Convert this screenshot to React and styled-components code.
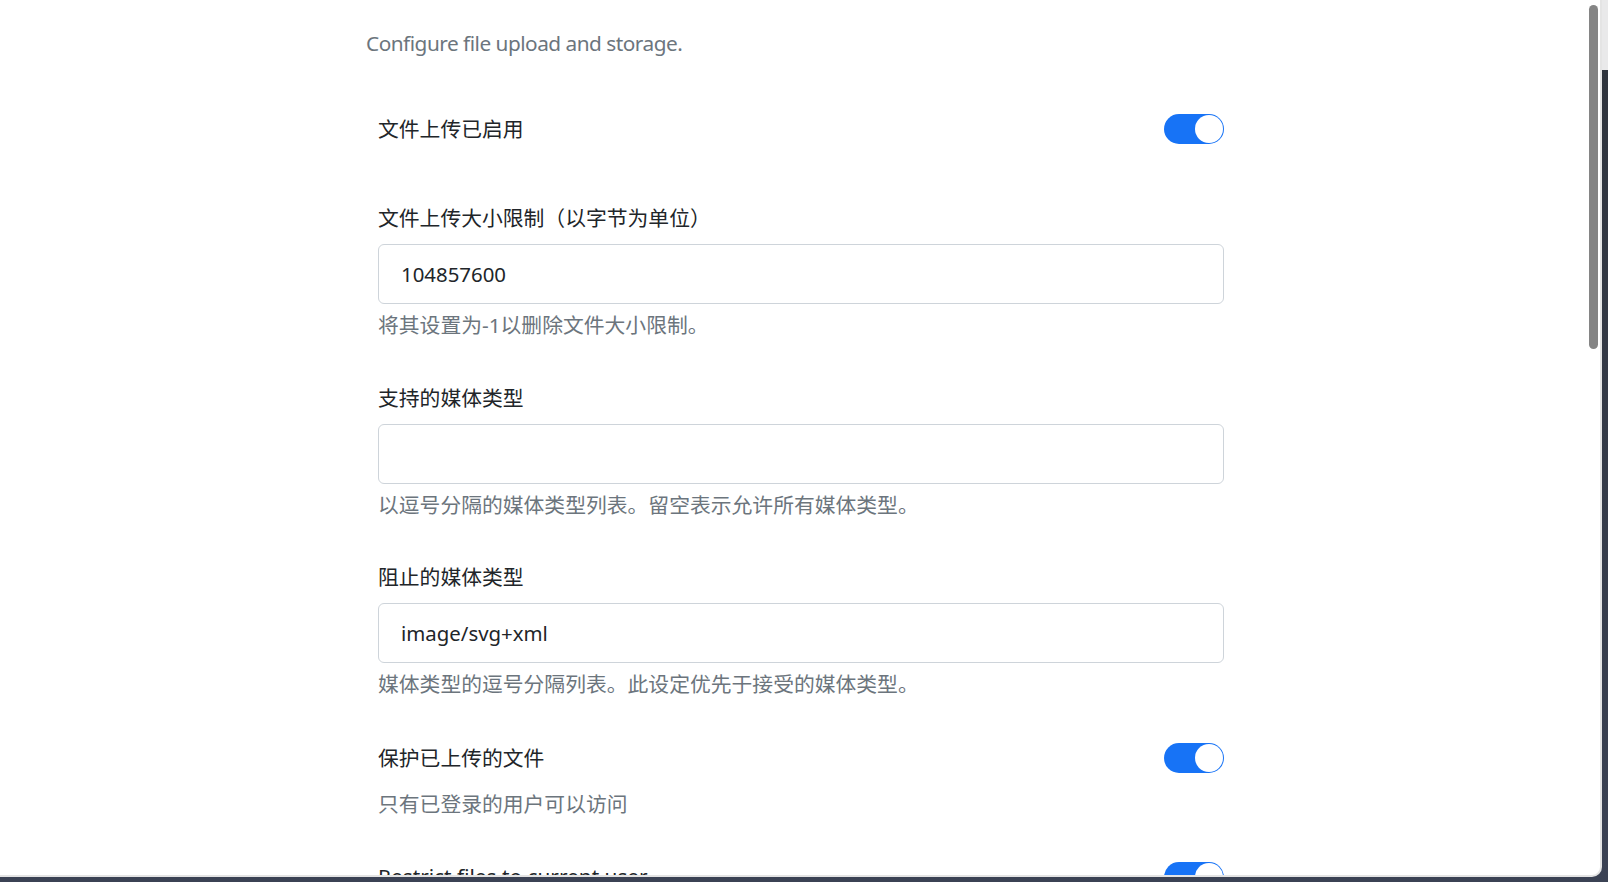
import React from "react";
import styled, { createGlobalStyle } from "styled-components";

const GlobalStyle = createGlobalStyle`
  html, body {
    margin: 0;
    padding: 0;
    height: 100%;
    overflow: hidden;
    background: #3d4350;
  }
  body {
    font-family: "Noto Sans", "Noto Sans CJK SC", sans-serif;
  }
`;

const Desktop = styled.div`
  width: 1608px;
  height: 882px;
  background: linear-gradient(180deg, #e9e9ea 0, #e9e9ea 70px, #2f343d 70px, #3b4254 100%);
`;

const Window = styled.div`
  position: relative;
  box-sizing: border-box;
  width: 1602px;
  height: 877px;
  background: #fff;
  border-right: 2px solid #e4e4e4;
  border-bottom: 2px solid #e4e4e4;
  border-bottom-right-radius: 10px;
  overflow: hidden;
`;

const ScrollThumb = styled.div`
  position: absolute;
  top: 5px;
  right: 2px;
  width: 9px;
  height: 344px;
  border-radius: 5px;
  background: #858585;
`;

const Content = styled.div`
  width: 858px;
  margin-left: 366px;
  padding-top: 28px;
  font-size: 20.8px;
  line-height: 1.5;
  color: #212529;
`;

const Description = styled.p`
  margin: 0 0 55px;
  color: #6c757d;
  letter-spacing: -0.5px;
`;

const Form = styled.div`
  display: flex;
  flex-direction: column;
  gap: 41px;
  padding-left: 12px;
`;

const SwitchRow = styled.div`
  display: flex;
  align-items: center;
  justify-content: space-between;
  height: 30px;
  margin-bottom: ${(p) => p.$extra || 0}px;
`;

const Field = styled.div`
  display: flex;
  flex-direction: column;
  margin-top: ${(p) => p.$shift || 0}px;
`;

const Label = styled.label`
  display: block;
  margin-bottom: 10px;
`;

const Input = styled.input`
  box-sizing: border-box;
  width: 846px;
  height: 60px;
  padding: 0 22px;
  border: 1px solid #ced4da;
  border-radius: 6px;
  font: inherit;
  font-size: 20.4px;
  color: #212529;
  background: #fff;
  outline: none;
`;

const Help = styled.div`
  margin-top: 6px;
  color: #6c757d;
`;

const SwitchHelp = styled(Help)`
  margin-top: 16px;
`;

const Track = styled.span`
  position: relative;
  display: inline-block;
  width: 60px;
  height: 30px;
  border-radius: 15px;
  background: ${(p) => (p.$on ? "#1773f6" : "#dee2e6")};
  flex-shrink: 0;
`;

const Knob = styled.span`
  position: absolute;
  top: 1px;
  right: ${(p) => (p.$on ? "1px" : "31px")};
  width: 28px;
  height: 28px;
  border-radius: 50%;
  background: #fff;
`;

function Switch({ on = true }) {
  return (
    <Track $on={on}>
      <Knob $on={on} />
    </Track>
  );
}

function TextField({ label, value, help }) {
  return (
    <Field>
      <Label>{label}</Label>
      <Input defaultValue={value} />
      <Help>{help}</Help>
    </Field>
  );
}

export default function App() {
  return (
    <Desktop>
      <GlobalStyle />
      <Window>
        <Content>
          <Description>Configure file upload and storage.</Description>
          <Form>
            <SwitchRow $extra={18}>
              <span>文件上传已启用</span>
              <Switch />
            </SwitchRow>
            <TextField
              label="文件上传大小限制（以字节为单位）"
              value="104857600"
              help="将其设置为-1以删除文件大小限制。"
            />
            <TextField
              label="支持的媒体类型"
              value=""
              help="以逗号分隔的媒体类型列表。留空表示允许所有媒体类型。"
            />
            <TextField
              label="阻止的媒体类型"
              value="image/svg+xml"
              help="媒体类型的逗号分隔列表。此设定优先于接受的媒体类型。"
            />
            <Field $shift={2}>
              <SwitchRow>
                <span>保护已上传的文件</span>
                <Switch />
              </SwitchRow>
              <SwitchHelp>只有已登录的用户可以访问</SwitchHelp>
            </Field>
            <SwitchRow>
              <span>Restrict files to current user</span>
              <Switch />
            </SwitchRow>
          </Form>
        </Content>
        <ScrollThumb />
      </Window>
    </Desktop>
  );
}
